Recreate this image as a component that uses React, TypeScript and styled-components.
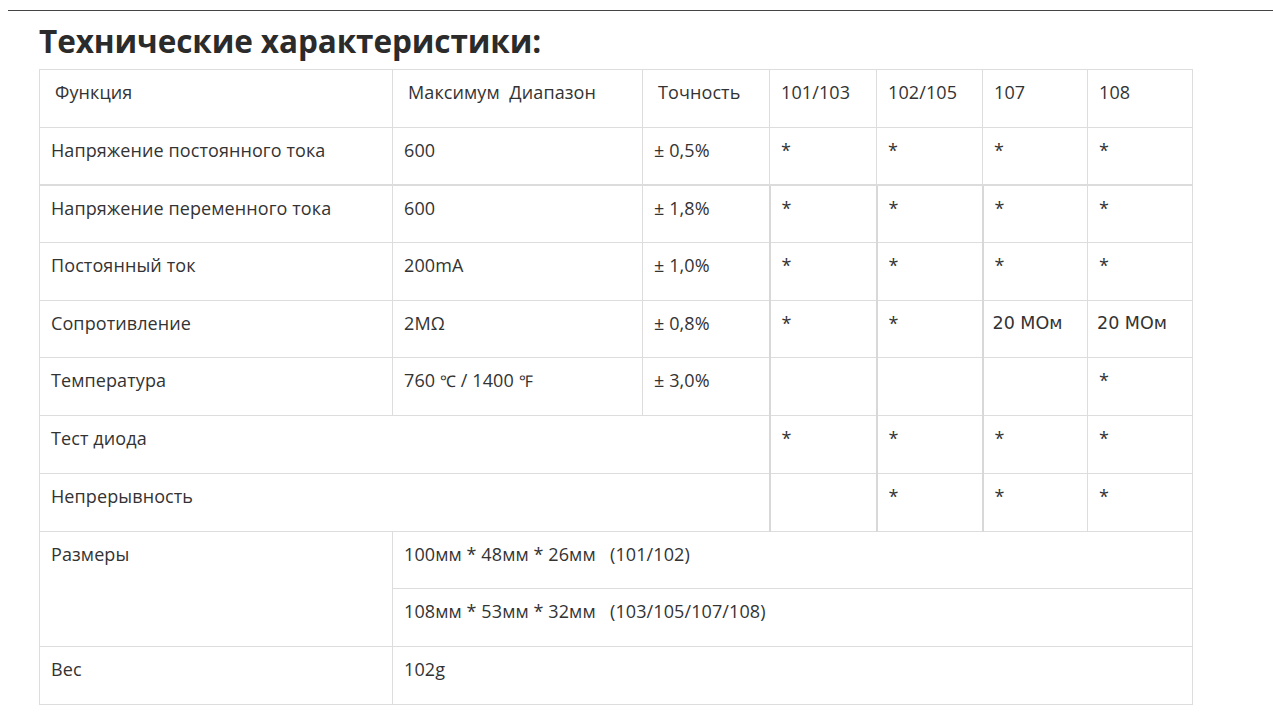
import React from "react";
import styled, { createGlobalStyle } from "styled-components";

const GlobalStyle = createGlobalStyle`
  html, body {
    margin: 0;
    padding: 0;
    background: #fff;
  }
  body {
    font-family: "Open Sans", "Noto Sans", sans-serif;
    color: #333;
  }
`;

type Cell = {
  text?: React.ReactNode;
  span?: number;
  rows?: number;
  wide?: boolean;
};

const widths = [353, 250, 127, 107, 106, 105, 105];
const header = ["Функция", "Максимум  Диапазон", "Точность"];
const models = ["101/103", "102/105", "107", "108"];

const Temp = () => (
  <>
    760 <Sym>℃</Sym> / 1400 <Sym>℉</Sym>
  </>
);

const rows: Cell[][] = [
  [{ text: "Напряжение постоянного тока" }, { text: "600" }, { text: "± 0,5%" }, { text: "*" }, { text: "*" }, { text: "*" }, { text: "*" }],
  [{ text: "Напряжение переменного тока" }, { text: "600" }, { text: "± 1,8%" }, { text: "*" }, { text: "*" }, { text: "*" }, { text: "*" }],
  [{ text: "Постоянный ток" }, { text: "200mA" }, { text: "± 1,0%" }, { text: "*" }, { text: "*" }, { text: "*" }, { text: "*" }],
  [{ text: "Сопротивление" }, { text: "2MΩ" }, { text: "± 0,8%" }, { text: "*" }, { text: "*" }, { text: "20 MОм", wide: true }, { text: "20 MОм", wide: true }],
  [{ text: "Температура" }, { text: <Temp /> }, { text: "± 3,0%" }, {}, {}, {}, { text: "*" }],
  [{ text: "Тест диода", span: 3 }, { text: "*" }, { text: "*" }, { text: "*" }, { text: "*" }],
  [{ text: "Непрерывность", span: 3 }, {}, { text: "*" }, { text: "*" }, { text: "*" }],
  [{ text: "Размеры", rows: 2 }, { text: "100мм * 48мм * 26мм   (101/102)", span: 6 }],
  [{ text: "108мм * 53мм * 32мм   (103/105/107/108)", span: 6 }],
  [{ text: "Вес" }, { text: "102g", span: 6 }],
];

// rows 1..6 carry the heavier grid lines on the model columns
const heavy = (i: number, j: number, len: number) =>
  i >= 1 && i <= 6 && j >= len - 4 && j <= len - 2;

export default function App() {
  return (
    <Page>
      <GlobalStyle />
      <TopRule />
      <Title>Технические характеристики:</Title>
      <SpecTable>
        <colgroup>
          {widths.map((w, i) => (
            <Col key={i} $w={w} />
          ))}
        </colgroup>
        <tbody>
          <tr>
            {header.map((h) => (
              <Td key={h} $indent>
                {h}
              </Td>
            ))}
            {models.map((m) => (
              <Td key={m}>{m}</Td>
            ))}
          </tr>
          {rows.map((row, i) => (
            <tr key={i}>
              {row.map((c, j) => (
                <Td
                  key={j}
                  colSpan={c.span}
                  rowSpan={c.rows}
                  $wide={c.wide}
                  $heavyLeft={heavy(i, j, row.length)}
                  $heavyTop={i === 1}
                >
                  {c.text}
                </Td>
              ))}
            </tr>
          ))}
        </tbody>
      </SpecTable>
    </Page>
  );
}

const Page = styled.div`
  width: 1273px;
  height: 716px;
  overflow: hidden;
`;

const TopRule = styled.div`
  margin: 10px 0 0 8px;
  border-top: 1px solid #444;
`;

const Title = styled.h1`
  margin: 10px 0 0 39px;
  font-size: 31.5px;
  line-height: 40px;
  font-weight: 700;
  color: #2b2b2b;
  letter-spacing: -0.1px;
`;

const SpecTable = styled.table`
  margin: 8px 0 0 39px;
  width: 1154px;
  table-layout: fixed;
  border-collapse: collapse;
  font-size: 16px;
  line-height: 24px;
`;

const Col = styled.col<{ $w: number }>`
  width: ${(p) => p.$w}px;
`;

const Td = styled.td<{
  $indent?: boolean;
  $wide?: boolean;
  $heavyLeft?: boolean;
  $heavyTop?: boolean;
}>`
  height: 57.7px;
  box-sizing: border-box;
  padding: 10px 11px 10px ${(p) => (p.$indent ? "15px" : p.$wide ? "9px" : "11px")};
  vertical-align: top;
  border: 1px solid #ddd;
  border-left: ${(p) => (p.$heavyLeft ? "2px solid #d8d8d8" : "1px solid #ddd")};
  border-top: ${(p) => (p.$heavyTop ? "2px solid #dcdcdc" : "1px solid #ddd")};
  color: #333;
  white-space: pre;
  font-family: ${(p) =>
    p.$wide ? '"DejaVu Sans", sans-serif' : '"Open Sans", "Noto Sans", sans-serif'};
  font-size: ${(p) => (p.$wide ? "17.5px" : "18px")};
  letter-spacing: ${(p) => (p.$wide ? "0" : "0.1px")};
`;

const Sym = styled.span`
  font-family: "Liberation Serif", serif;
  font-size: 16px;
`;
